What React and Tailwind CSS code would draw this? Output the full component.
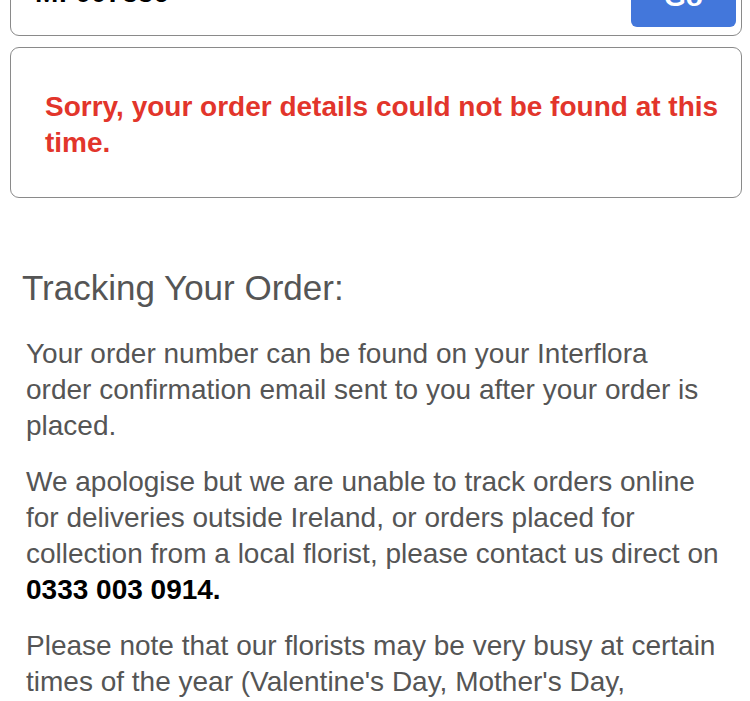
export default function App() {
  return (
    <div className="min-h-screen overflow-hidden bg-white pl-[10px] pr-[8px] font-['Liberation_Sans',Arial,sans-serif]">
      {/* order number search, scrolled mostly off screen */}
      <div className="-mt-[40px] flex h-[76px] items-end justify-between rounded-[9px] border-[1.5px] border-[#8a8a8a] pb-[8px] pl-[24px] pr-[5px]">
        <span className="mb-[16px] text-[28px] font-bold leading-[36px] text-black">M: 007336</span>
        <button className="h-[48px] w-[105px] rounded-[6px] bg-[#4377db] pb-[20px] text-[28px] font-bold leading-[36px] text-white">
          Go
        </button>
      </div>

      <div className="mt-[11px] rounded-[9px] border-[1.5px] border-[#8a8a8a] pb-[36px] pl-[34px] pr-[12px] pt-[41px]">
        <p className="text-[28px] font-bold leading-[36px] text-[#e2352b]">
          Sorry, your order details could not be found at this time.
        </p>
      </div>

      <h2 className="ml-[12px] mt-[70px] text-[35px] leading-[40px] text-[#555]">Tracking Your Order:</h2>

      <div className="ml-[16px] mt-[28px] w-[693px] text-[28px] leading-[36px] text-[#555]">
        <p className="mb-[20px]">
          Your order number can be found on your Interflora order confirmation email sent to you after your order is
          placed.
        </p>
        <p className="mb-[20px]">
          We apologise but we are unable to track orders online for deliveries outside Ireland, or orders placed for
          collection from a local florist, please contact us direct on <b className="text-black">0333 003 0914.</b>
        </p>
        <p className="mb-[20px]">
          Please note that our florists may be very busy at certain times of the year (Valentine's Day, Mother's Day,
          Christmas) and so we may not be able to respond to your query straight away.
        </p>
      </div>
    </div>
  );
}
